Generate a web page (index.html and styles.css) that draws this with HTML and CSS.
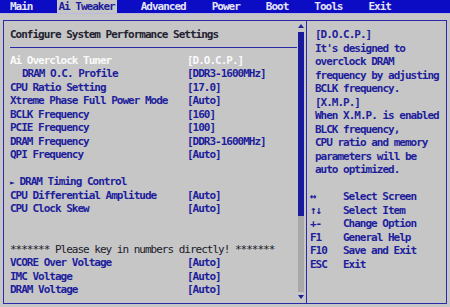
FILE: index.html
```html
<!DOCTYPE html>
<html lang="en">
<head>
    <meta charset="UTF-8">
    <meta name="viewport" content="width=device-width, initial-scale=1.0">
    <title>BIOS Setup - Ai Tweaker</title>
    <link rel="stylesheet" href="styles.css">
</head>
<body>
    <nav class="menu-bar">
        <span class="menu-item">Main</span>
        <span class="menu-item active">Ai Tweaker</span>
        <span class="menu-item">Advanced</span>
        <span class="menu-item">Power</span>
        <span class="menu-item">Boot</span>
        <span class="menu-item">Tools</span>
        <span class="menu-item">Exit</span>
    </nav>

    <div class="frame">
        <div class="settings-panel">
            <div class="settings">
                <div class="heading">Configure System Performance Settings</div>
                <div class="rule"></div>
                <div class="row selected"><span>Ai Overclock Tuner</span><span>[D.O.C.P.]</span></div>
                <div class="row"><span class="indent">DRAM O.C. Profile</span><span>[DDR3-1600MHz]</span></div>
                <div class="row"><span>CPU Ratio Setting</span><span>[17.0]</span></div>
                <div class="row"><span>Xtreme Phase Full Power Mode</span><span>[Auto]</span></div>
                <div class="row"><span>BCLK Frequency</span><span>[160]</span></div>
                <div class="row"><span>PCIE Frequency</span><span>[100]</span></div>
                <div class="row"><span>DRAM Frequency</span><span>[DDR3-1600MHz]</span></div>
                <div class="row"><span>QPI Frequency</span><span>[Auto]</span></div>
                <div class="row blank"></div>
                <div class="row"><span><span class="submenu">&#9658;</span> DRAM Timing Control</span><span></span></div>
                <div class="row"><span>CPU Differential Amplitude</span><span>[Auto]</span></div>
                <div class="row"><span>CPU Clock Skew</span><span>[Auto]</span></div>
                <div class="row blank"></div>
                <div class="row blank"></div>
                <div class="notice">******* Please key in numbers directly! *******</div>
                <div class="row"><span>VCORE Over Voltage</span><span>[Auto]</span></div>
                <div class="row"><span>IMC Voltage</span><span>[Auto]</span></div>
                <div class="row"><span>DRAM Voltage</span><span>[Auto]</span></div>
            </div>
            <div class="scrollbar">
                <div class="arrow-up"></div>
                <div class="thumb"></div>
                <div class="track"></div>
                <div class="arrow-down"></div>
            </div>
        </div>

        <div class="help-panel">
            <div class="help-text">
                <div>[D.O.C.P.]</div>
                <div>It's designed to</div>
                <div>overclock DRAM</div>
                <div>frequency by adjusting</div>
                <div>BCLK frequency.</div>
                <div>[X.M.P.]</div>
                <div>When X.M.P. is enabled</div>
                <div>BLCK frequency,</div>
                <div>CPU ratio and memory</div>
                <div>parameters will be</div>
                <div>auto optimized.</div>
            </div>
            <ul class="keys">
                <li><span class="key">&#8596;</span><span>Select Screen</span></li>
                <li><span class="key">&#8593;&#8595;</span><span>Select Item</span></li>
                <li><span class="key">+-</span><span>Change Option</span></li>
                <li><span class="key">F1</span><span>General Help</span></li>
                <li><span class="key">F10</span><span>Save and Exit</span></li>
                <li><span class="key">ESC</span><span>Exit</span></li>
            </ul>
        </div>
    </div>
</body>
</html>
```

FILE: styles.css
```css
body {
    margin: 0;
    background-color: #c6c6c6;
    color: #1e1e9c;
    font-family: 'DejaVu Sans Mono', 'Liberation Mono', monospace;
    font-size: 11px;
    font-weight: bold;
    letter-spacing: -1px;
    line-height: 13.5px;
    height: 307px;
    overflow: hidden;
}
.menu-bar {
    display: flex;
    gap: 22px;
    height: 13px;
    line-height: 13px;
    padding-left: 8px;
    background-color: #0c0cc4;
    border-bottom: 1px solid #b8b8e0;
    color: #e4e4f4;
}
.menu-item {
    padding: 0 2px;
}
.menu-item.active {
    background-color: #c6c6c6;
    color: #1e1e9c;
}
.frame {
    display: flex;
    height: 284px;
    margin: 6px 3px 0 3px;
    border: 1px solid #2a2aa8;
    box-sizing: border-box;
}
.settings-panel {
    display: flex;
    width: 302px;
}
.settings {
    flex: 1;
    padding: 7px 1px 0 6px;
}
.heading, .notice {
    color: #1a1a2a;
    font-weight: normal;
}
.heading {
    font-weight: bold;
    color: #222230;
}
.rule {
    height: 1px;
    background-color: #2a2aa8;
    margin: 5px 0 6px 0;
}
.row {
    display: grid;
    grid-template-columns: 177px 1fr;
    height: 13.5px;
    white-space: nowrap;
}
.row.selected {
    color: #fafafa;
}
.indent {
    padding-left: 12px;
}
.submenu {
    font-size: 8px;
}
.scrollbar {
    display: flex;
    flex-direction: column;
    align-items: center;
    width: 6px;
    margin: 3px 2px 4px 0;
}
.arrow-up, .arrow-down {
    width: 0;
    height: 0;
    border-left: 3px solid transparent;
    border-right: 3px solid transparent;
}
.arrow-up {
    border-bottom: 4px solid #1e1e9c;
    margin-bottom: 4px;
}
.arrow-down {
    border-top: 4px solid #1e1e9c;
    margin-top: 3px;
}
.thumb {
    width: 6px;
    height: 184px;
    background-color: #1a1a9e;
}
.track {
    width: 6px;
    flex: 1;
    background-color: #a8a8a8;
}
.help-panel {
    flex: 1;
    border-left: 1px solid #2a2aa8;
    padding: 7px 0 0 3px;
    white-space: nowrap;
}
.help-text {
    padding-left: 5px;
    margin-bottom: 13.5px;
}
.keys {
    list-style-type: none;
    margin: 0;
    padding: 0;
}
.keys li {
    display: flex;
}
.key {
    width: 33px;
}
```
